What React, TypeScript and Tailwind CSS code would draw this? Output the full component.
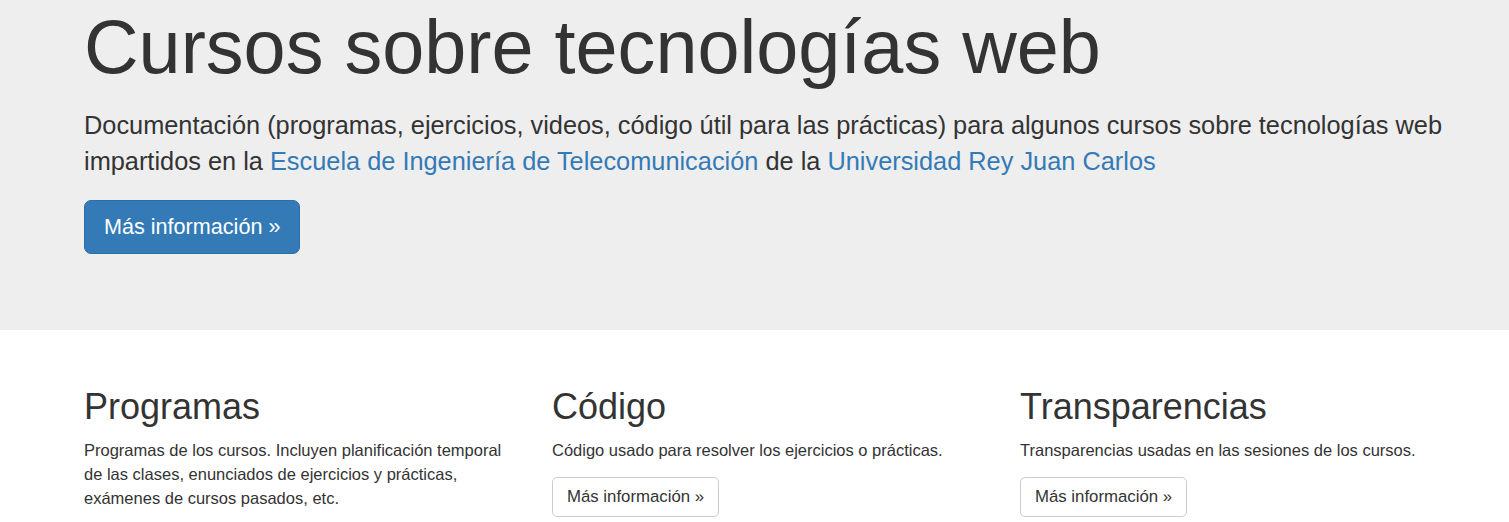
import React from "react";

const cols = [
  {
    title: "Programas",
    text: "Programas de los cursos. Incluyen planificación temporal de las clases, enunciados de ejercicios y prácticas, exámenes de cursos pasados, etc.",
  },
  { title: "Código", text: "Código usado para resolver los ejercicios o prácticas." },
  { title: "Transparencias", text: "Transparencias usadas en las sesiones de los cursos." },
];

export default function App() {
  return (
    <div className="min-h-[522px] bg-white text-[#333] font-['Liberation_Sans',Arial,sans-serif] text-[16.5px] leading-[24px]">
      <div className="bg-[#eeeeee] pb-[57.6px]">
        <div className="pl-[84px] pr-[52px]">
          <h1 className="pt-[6px] text-[75.6px] leading-[83px] mb-[18px] text-[#333]">
            Cursos sobre tecnologías web
          </h1>
          <p className="text-[25.35px] leading-[36px] mb-[21px]">
            Documentación (programas, ejercicios, videos, código útil para las prácticas) para algunos cursos sobre
            tecnologías web impartidos en la{" "}
            <a className="text-[#337ab7]" href="#">
              Escuela de Ingeniería de Telecomunicación
            </a>{" "}
            de la{" "}
            <a className="text-[#337ab7]" href="#">
              Universidad Rey Juan Carlos
            </a>
          </p>
          <p className="mb-[18px]">
            <a
              href="#"
              className="inline-block bg-[#337ab7] border border-[#2e6da4] text-white rounded-[7px] px-[19px] py-[12px] text-[21.6px] leading-[28px]"
            >
              Más información »
            </a>
          </p>
        </div>
      </div>
      <div className="mt-[33px] pl-[84px] grid grid-cols-[468px_468px_468px]">
        {cols.map((c) => (
          <div key={c.title} className="pr-[36px]">
            <h2 className="mt-[24px] mb-[12px] text-[36px] leading-[39.6px]">{c.title}</h2>
            <p className="mb-[15px]">{c.text}</p>
            {c.title !== "Programas" && (
              <a
                href="#"
                className="inline-block border border-[#ccc] rounded-[5px] px-[14px] py-[7px] text-[16.8px] leading-[24px] text-[#333] bg-white"
              >
                Más información »
              </a>
            )}
          </div>
        ))}
      </div>
    </div>
  );
}
